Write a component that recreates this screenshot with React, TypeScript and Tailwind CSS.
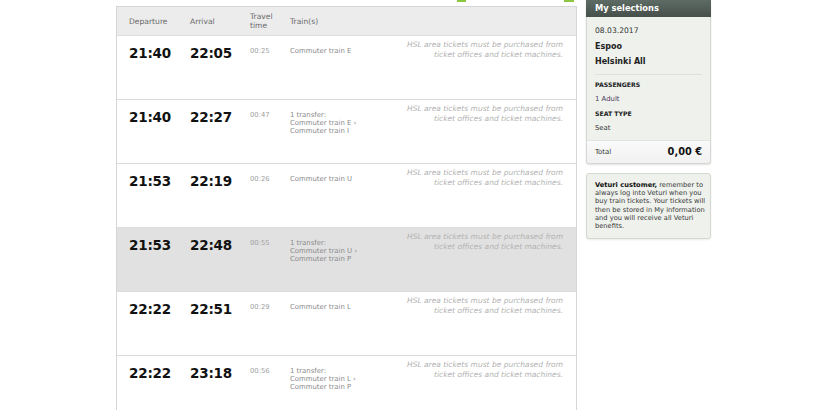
import React from "react";

type Row = {
  dep: string;
  arr: string;
  dur: string;
  trains: string[];
  note: boolean;
  hl?: boolean;
};

const rows: Row[] = [
  { dep: "21:40", arr: "22:05", dur: "00:25", trains: ["Commuter train E"], note: true },
  { dep: "21:40", arr: "22:27", dur: "00:47", trains: ["1 transfer:", "Commuter train E ›", "Commuter train I"], note: true },
  { dep: "21:53", arr: "22:19", dur: "00:26", trains: ["Commuter train U"], note: true },
  { dep: "21:53", arr: "22:48", dur: "00:55", trains: ["1 transfer:", "Commuter train U ›", "Commuter train P"], note: true, hl: true },
  { dep: "22:22", arr: "22:51", dur: "00:29", trains: ["Commuter train L"], note: true },
  { dep: "22:22", arr: "23:18", dur: "00:56", trains: ["1 transfer:", "Commuter train L ›", "Commuter train P"], note: true },
];

const font = { fontFamily: '"DejaVu Sans", Verdana, sans-serif' };

export default function App() {
  return (
    <div
      className="w-[820px] h-[410px] bg-white overflow-hidden flex items-start"
      style={font}
    >
      {/* main column */}
      <div className="ml-[116px] w-[461px] flex flex-col">
        <div className="h-[2px] flex">
          <div className="ml-[341px] w-[9px] h-[2px] bg-[#8dc63f]" />
          <div className="ml-[98px] w-[10px] h-[2px] bg-[#8dc63f]" />
        </div>
        <div className="mt-[4px] border-x border-t border-[#d6d6d6] flex flex-col">
          {/* header */}
          <div className="h-[29px] bg-[#ececec] border-b border-[#dcdcdc] flex items-center pl-[12px] text-[7.6px] leading-[9px] text-[#6a6a6a]">
            <div className="w-[61px]">Departure</div>
            <div className="w-[60px]">Arrival</div>
            <div className="w-[40px]">
              <div>Travel</div>
              <div>time</div>
            </div>
            <div>Train(s)</div>
          </div>
          {rows.map((r, i) => (
            <div
              key={i}
              className={`h-[64px] border-b border-[#dcdcdc] flex pl-[12px] pr-[13px] ${r.hl ? "bg-[#e1e1e1]" : "bg-white"}`}
            >
              <div className="w-[61px] pt-[9px] text-[13.5px] leading-[16px] font-bold text-[#111] tracking-[-0.2px]">
                {r.dep}
              </div>
              <div className="w-[60px] pt-[9px] text-[13.5px] leading-[16px] font-bold text-[#111] tracking-[-0.2px]">
                {r.arr}
              </div>
              <div className="w-[40px] pt-[11px] text-[6.8px] leading-[8px] text-[#a0a0a0]">
                {r.dur}
              </div>
              <div className="w-[100px] pt-[11px] text-[6.9px] leading-[8px] text-[#8a8a8a]">
                {r.trains.map((t, j) => (
                  <div key={j}>{t}</div>
                ))}
              </div>
              <div className="flex-1 pt-[4px] text-right italic text-[7.5px] leading-[9.5px] text-[#b2b2b2]">
                {r.note && (
                  <>
                    <div>HSL area tickets must be purchased from</div>
                    <div>ticket offices and ticket machines.</div>
                  </>
                )}
              </div>
            </div>
          ))}
        </div>
      </div>

      {/* sidebar */}
      <div className="ml-[9px] w-[125px] flex flex-col">
        <div className="rounded-b-[3px] shadow-[0_1px_2px_rgba(0,0,0,0.12)] border border-t-0 border-[#d3d8d0] bg-[#eef1ec] flex flex-col">
          <div className="-mx-px h-[17px] bg-gradient-to-b from-[#5e6a64] to-[#46514c] px-[9px] flex items-center text-white font-bold text-[8.3px]">
            My selections
          </div>
          <div className="px-[8px] pt-[9px] text-[#333]">
            <div className="text-[7.6px] leading-[10px]">08.03.2017</div>
            <div className="mt-[6px] text-[8px] leading-[10px] font-bold text-[#222]">Espoo</div>
            <div className="mt-[5px] text-[8px] leading-[10px] font-bold text-[#222]">Helsinki All</div>
            <div className="mt-[7px] border-t border-[#dde2da]" />
            <div className="mt-[6px] text-[6.2px] leading-[8px] font-bold text-[#222]">PASSENGERS</div>
            <div className="mt-[6px] text-[6.9px] leading-[8px] text-[#4a3a5a]">1 Adult</div>
            <div className="mt-[7px] text-[6.2px] leading-[8px] font-bold text-[#222]">SEAT TYPE</div>
            <div className="mt-[6px] text-[6.9px] leading-[8px] text-[#333]">Seat</div>
          </div>
          <div className="mt-[8px] h-[23px] rounded-b-[3px] bg-gradient-to-b from-[#fafafa] to-[#f1f1f1] border-t border-[#e2e5e0] px-[8px] flex items-center justify-between">
            <span className="text-[6.9px] text-[#333]">Total</span>
            <span className="text-[9.8px] font-bold text-[#111]">0,00 €</span>
          </div>
        </div>
        <div className="mt-[9px] rounded-[3px] border border-[#d3d8d0] bg-[#eef1ec] px-[8px] pt-[7px] pb-[8px] text-[6.7px] leading-[8.2px] text-[#3a3a3a] shadow-[0_1px_2px_rgba(0,0,0,0.08)] whitespace-nowrap">
          <div>
            <span className="font-bold text-[#111]">Veturi customer,</span> remember to
          </div>
          <div>always log into Veturi when you</div>
          <div>buy train tickets. Your tickets will</div>
          <div>then be stored in My information</div>
          <div>and you will receive all Veturi</div>
          <div>benefits.</div>
        </div>
      </div>
    </div>
  );
}
